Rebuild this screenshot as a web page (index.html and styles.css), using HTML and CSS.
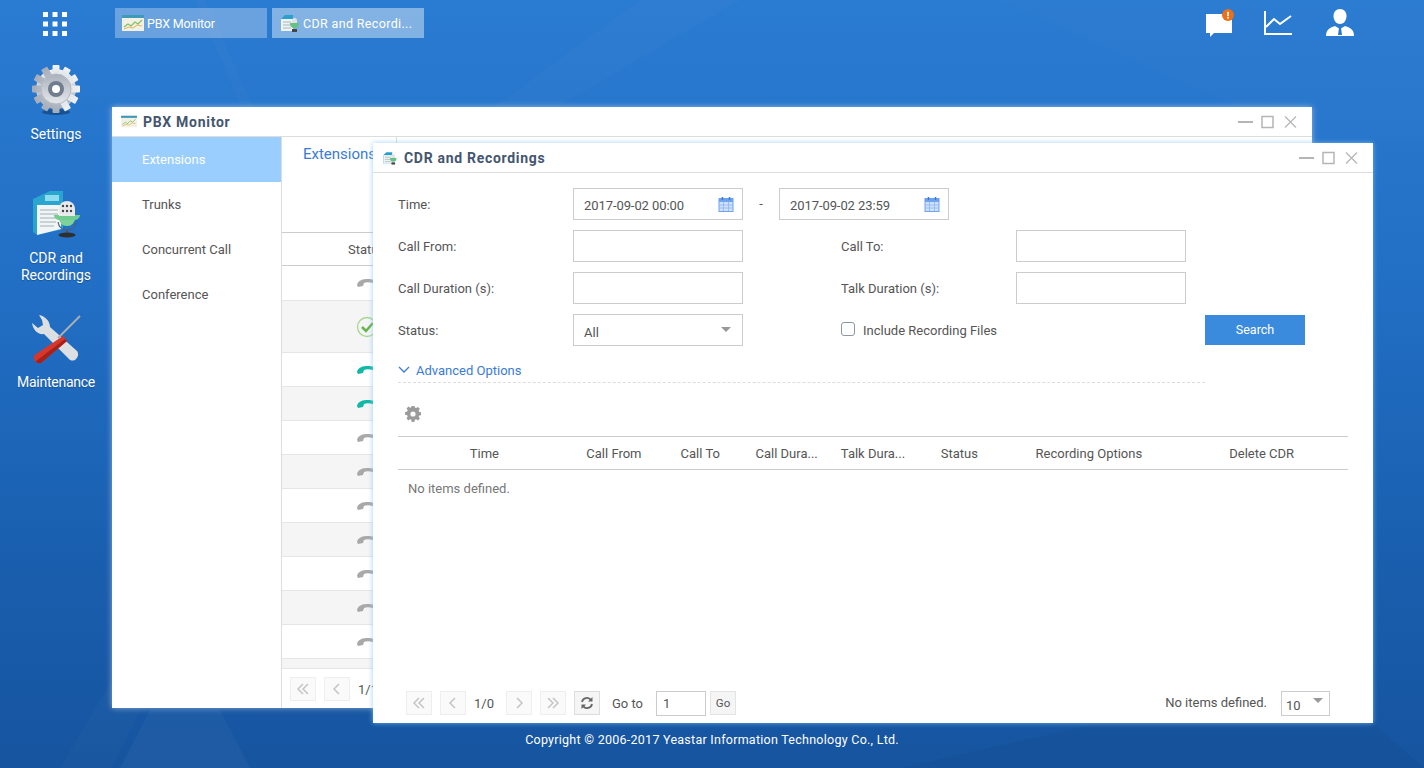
FILE: index.html
```html
<!DOCTYPE html>
<html lang="en">

<head>
    <meta charset="UTF-8">
    <title>Yeastar PBX</title>
    <link rel="stylesheet" href="styles.css">
</head>

<body>
    <svg class="wallpaper" viewBox="0 0 1424 768" aria-hidden="true">
        <polygon points="195,0 205,0 340,300 112,768 60,768 330,310" fill="#fff" opacity="0.018"/>
        <polygon points="640,0 740,0 500,140 450,140" fill="#fff" opacity="0.02"/>
        <polygon points="1000,0 1424,0 1424,140 1312,140" fill="#fff" opacity="0.01"/>
        <polygon points="120,768 150,710 220,710 250,768" fill="#fff" opacity="0.035"/>
        <polygon points="900,768 1100,723 1373,723 1424,768" fill="#000" opacity="0.03"/>
    </svg>

    <!-- top bar -->
    <header class="topbar">
        <svg class="apps-icon" viewBox="0 0 24 24">
            <g fill="#fff">
                <rect x="0" y="0" width="5" height="5"/><rect x="9.5" y="0" width="5" height="5"/><rect x="19" y="0" width="5" height="5"/>
                <rect x="0" y="9.5" width="5" height="5"/><rect x="9.5" y="9.5" width="5" height="5"/><rect x="19" y="9.5" width="5" height="5"/>
                <rect x="0" y="19" width="5" height="5"/><rect x="9.5" y="19" width="5" height="5"/><rect x="19" y="19" width="5" height="5"/>
            </g>
        </svg>
        <div class="task-list">
            <div class="task task-back">
                <svg class="small-icon" viewBox="0 0 22 18"><use href="#monitor-icon"/></svg>
                <span>PBX Monitor</span>
            </div>
            <div class="task task-front">
                <svg class="small-icon" viewBox="0 0 22 18"><use href="#cdr-icon"/></svg>
                <span>CDR and Recordi...</span>
            </div>
        </div>
        <div class="top-actions">
            <svg class="top-icon" viewBox="0 0 30 26">
                <path d="M1 4h26v19H9l-4 4v-4H1z" fill="#fff"/>
                <circle cx="23" cy="5" r="6" fill="#e8701a"/>
                <rect x="22.2" y="1.8" width="1.6" height="4.4" fill="#fff"/>
                <rect x="22.2" y="7" width="1.6" height="1.6" fill="#fff"/>
            </svg>
            <svg class="top-icon" viewBox="0 0 30 26">
                <path d="M2 1v23h27" fill="none" stroke="#fff" stroke-width="2"/>
                <path d="M3 17l8-8 6 5 11-8" fill="none" stroke="#fff" stroke-width="2"/>
            </svg>
            <svg class="top-icon user-icon" viewBox="0 0 28 28">
                <path d="M14 0c4 0 6.500 3 6.500 7 0 3.500-2 8-6.500 8s-6.500-4.500-6.500-8c0-4 2.500-7 6.500-7z" fill="#fff"/>
                <path d="M0 27c0-6 3-8 9-10l5 3 5-3c6 2 9 4 9 10z" fill="#fff"/>
                <path d="M13 19h2l1 7h-4z" fill="#2a78cf"/>
            </svg>
        </div>
    </header>

    <!-- desktop icons -->
    <nav class="desktop-icons">
        <div class="desk-item item-settings">
            <svg class="desk-icon" viewBox="0 0 50 50">
                <defs>
                    <linearGradient id="gearFill" x1="0" y1="0" x2="0" y2="1">
                        <stop offset="0" stop-color="#f0f2f4"/>
                        <stop offset="1" stop-color="#a4acb8"/>
                    </linearGradient>
                    <linearGradient id="gearInner" x1="0" y1="0" x2="0" y2="1">
                        <stop offset="0" stop-color="#aab1bc"/>
                        <stop offset="1" stop-color="#e6e8ec"/>
                    </linearGradient>
                </defs>
                <ellipse cx="25" cy="47" rx="14" ry="3" fill="#0d3a70" opacity="0.6"/>
                <g fill="url(#gearFill)">
                    <circle cx="25" cy="24" r="20"/>
                    <rect x="21.500" y="0" width="7" height="48" rx="1"/>
                    <rect x="21.500" y="0" width="7" height="48" rx="1" transform="rotate(30 25 24)"/>
                    <rect x="21.500" y="0" width="7" height="48" rx="1" transform="rotate(60 25 24)"/>
                    <rect x="21.500" y="0" width="7" height="48" rx="1" transform="rotate(90 25 24)"/>
                    <rect x="21.500" y="0" width="7" height="48" rx="1" transform="rotate(120 25 24)"/>
                    <rect x="21.500" y="0" width="7" height="48" rx="1" transform="rotate(150 25 24)"/>
                </g>
                <circle cx="25" cy="24" r="15" fill="url(#gearInner)" stroke="#b4bac4"/>
                <circle cx="25" cy="24" r="8" fill="#717c8e"/>
                <circle cx="25" cy="24" r="4" fill="#fff"/>
            </svg>
            <span>Settings</span>
        </div>
        <div class="desk-item item-cdr">
            <svg class="desk-icon" viewBox="0 0 50 50">
                <path d="M2 10L19 2h13v38L6 46l-4-3z" fill="#2aa5d0"/>
                <path d="M6 16h24v24L6 46z" fill="#f2f5f5"/>
                <path d="M14 6h14v6H14z" fill="#8fdcf0"/>
                <path d="M9 21h18M9 25h18M9 29h18M9 33h16M9 37h14" stroke="#bcc6ca" stroke-width="1.300"/>
                <path d="M27 33c1 6 5 8 9 8s8-2 9-8" fill="none" stroke="#55606a" stroke-width="1.200"/>
                <path d="M36 41v4" stroke="#555" stroke-width="2"/>
                <ellipse cx="36" cy="46" rx="8.500" ry="2.500" fill="#2f2f2f"/>
                <rect x="28" y="22" width="16" height="15" rx="7.500" fill="#7ed39a"/>
                <path d="M23 26h26c0 3-3 5-6 5H29c-3 0-6-2-6-5z" fill="#72cc90"/>
                <path d="M28 20a8 8 0 0 1 16 0v7H28z" fill="#e8eaec"/>
                <circle cx="32" cy="17" r="1.200" fill="#444"/><circle cx="36" cy="17" r="1.200" fill="#444"/><circle cx="40" cy="17" r="1.200" fill="#444"/>
                <circle cx="32" cy="22" r="1.200" fill="#444"/><circle cx="36" cy="22" r="1.200" fill="#444"/><circle cx="40" cy="22" r="1.200" fill="#444"/>
            </svg>
            <span>CDR and<br>Recordings</span>
        </div>
        <div class="desk-item item-maint">
            <svg class="desk-icon" viewBox="0 0 50 50">
                <path d="M8 1c6 1 11 6 11 12l27 24c2 3 1 6-1 8s-5 2-7 0L13 20C7 21 2 16 1 9l6 5 5-3-1-5z" fill="#dde0e3"/>
                <path d="M49 2L27 24" stroke="#a8aeb3" stroke-width="2"/>
                <path d="M32 22l4 5-26 22c-3 1-6-1-7-4-1-2 0-4 2-5z" fill="#d6372c"/>
                <path d="M34 25l2 2-26 22c-2 .7-4 0-5.500-1.500z" fill="#a92018"/>
            </svg>
            <span>Maintenance</span>
        </div>
    </nav>

    <!-- PBX Monitor window -->
    <section class="window window-pbx">
        <div class="win-title">
            <svg class="small-icon" viewBox="0 0 22 18"><use href="#monitor-icon"/></svg>
            <span class="win-name">PBX Monitor</span>
            <svg class="win-controls" viewBox="0 0 59 14"><use href="#controls"/></svg>
        </div>
        <div class="pbx-main">
            <ul class="side-menu">
                <li class="active">Extensions</li>
                <li>Trunks</li>
                <li>Concurrent Call</li>
                <li>Conference</li>
            </ul>
            <div class="pbx-content">
                <div class="tab-strip">
                    <div class="tab">Extensions</div>
                </div>
                <div class="pbx-head">Status</div>
                <div class="pbx-row first"><svg class="phone" viewBox="0 0 20 10"><use href="#phone-icon"/></svg></div>
                <div class="pbx-row alt tall">
                    <svg class="check" viewBox="0 0 22 22">
                        <circle cx="11" cy="11" r="9.500" fill="none" stroke="#a6d88f" stroke-width="1.300"/>
                        <path d="M6 11l4 4 7-8" fill="none" stroke="#66b545" stroke-width="2.500"/>
                    </svg>
                </div>
                <div class="pbx-row"><svg class="phone busy" viewBox="0 0 20 10"><use href="#phone-icon"/></svg></div>
                <div class="pbx-row alt"><svg class="phone busy" viewBox="0 0 20 10"><use href="#phone-icon"/></svg></div>
                <div class="pbx-row"><svg class="phone" viewBox="0 0 20 10"><use href="#phone-icon"/></svg></div>
                <div class="pbx-row alt"><svg class="phone" viewBox="0 0 20 10"><use href="#phone-icon"/></svg></div>
                <div class="pbx-row"><svg class="phone" viewBox="0 0 20 10"><use href="#phone-icon"/></svg></div>
                <div class="pbx-row alt"><svg class="phone" viewBox="0 0 20 10"><use href="#phone-icon"/></svg></div>
                <div class="pbx-row"><svg class="phone" viewBox="0 0 20 10"><use href="#phone-icon"/></svg></div>
                <div class="pbx-row alt"><svg class="phone" viewBox="0 0 20 10"><use href="#phone-icon"/></svg></div>
                <div class="pbx-row"><svg class="phone" viewBox="0 0 20 10"><use href="#phone-icon"/></svg></div>
                <div class="pbx-row alt short"></div>
                <div class="pbx-pager">
                    <button class="page-btn"><svg viewBox="0 0 14 12"><use href="#first-icon"/></svg></button>
                    <button class="page-btn"><svg viewBox="0 0 14 12"><use href="#prev-icon"/></svg></button>
                    <span class="page-num">1/1</span>
                </div>
            </div>
        </div>
    </section>

    <!-- CDR window -->
    <section class="window window-cdr">
        <div class="win-title">
            <svg class="small-icon" viewBox="0 0 22 18"><use href="#cdr-icon"/></svg>
            <span class="win-name">CDR and Recordings</span>
            <svg class="win-controls" viewBox="0 0 59 14"><use href="#controls"/></svg>
        </div>
        <div class="cdr-body">
            <div class="form-row">
                <label>Time:</label>
                <div class="input date">2017-09-02 00:00
                    <svg class="cal" viewBox="0 0 16 16"><use href="#cal-icon"/></svg>
                </div>
                <span class="dash">-</span>
                <div class="input date">2017-09-02 23:59
                    <svg class="cal" viewBox="0 0 16 16"><use href="#cal-icon"/></svg>
                </div>
            </div>
            <div class="form-row">
                <label>Call From:</label>
                <div class="input"></div>
                <label class="second">Call To:</label>
                <div class="input"></div>
            </div>
            <div class="form-row">
                <label>Call Duration (s):</label>
                <div class="input"></div>
                <label class="second">Talk Duration (s):</label>
                <div class="input"></div>
            </div>
            <div class="form-row">
                <label>Status:</label>
                <div class="input select">All<i class="caret"></i></div>
                <div class="include"><i class="checkbox"></i>Include Recording Files</div>
                <button class="search-btn">Search</button>
            </div>

            <div class="advanced">
                <svg viewBox="0 0 12 8"><path d="M1 1l5 5 5-5" fill="none" stroke="#3a7bd5" stroke-width="1.300"/></svg>
                <span>Advanced Options</span>
            </div>

            <div class="toolbar">
                <svg class="cog" viewBox="0 0 16 16">
                    <path d="M6.500 0h3l.4 2.200 1.500.6 1.900-1.300 2.100 2.100-1.300 1.900.6 1.500 2.300.4v3l-2.300.4-.6 1.500 1.300 1.900-2.100 2.100-1.900-1.300-1.500.6-.4 2.300h-3l-.4-2.300-1.500-.6-1.900 1.300L.9 13.900l1.300-1.900-.6-1.500L-.7 10V7l2.300-.4.600-1.500L.9 3.200 3 1.100l1.900 1.300 1.200-.6z" fill="#9b9b9b" transform="translate(.7 -.5) scale(.92)"/>
                    <circle cx="8" cy="8" r="2.600" fill="#fff"/>
                </svg>
            </div>

            <div class="cdr-head">
                <span>Time</span>
                <span>Call From</span>
                <span>Call To</span>
                <span>Call Dura...</span>
                <span>Talk Dura...</span>
                <span>Status</span>
                <span>Recording Options</span>
                <span>Delete CDR</span>
            </div>
            <div class="empty">No items defined.</div>
        </div>
        <div class="cdr-pager">
            <button class="page-btn"><svg viewBox="0 0 14 12"><use href="#first-icon"/></svg></button>
            <button class="page-btn"><svg viewBox="0 0 14 12"><use href="#prev-icon"/></svg></button>
            <span class="page-num">1/0</span>
            <button class="page-btn"><svg viewBox="0 0 14 12"><use href="#next-icon"/></svg></button>
            <button class="page-btn"><svg viewBox="0 0 14 12"><use href="#last-icon"/></svg></button>
            <button class="page-btn refresh">
                <svg viewBox="0 0 14 14">
                    <path d="M2 6a5 5 0 0 1 9-2M12 8a5 5 0 0 1-9 2" fill="none" stroke="#666" stroke-width="1.800"/>
                    <path d="M12.500 1v4.500H8zM1.500 13V8.500H6z" fill="#666"/>
                </svg>
            </button>
            <span class="goto">Go to</span>
            <div class="goto-input">1</div>
            <button class="go-btn">Go</button>
            <span class="pager-info">No items defined.</span>
            <div class="size-select">10<i class="caret"></i></div>
        </div>
    </section>

    <footer class="copyright">Copyright © 2006-2017 Yeastar Information Technology Co., Ltd.</footer>

    <!-- shared icons -->
    <svg class="defs" aria-hidden="true">
        <defs>
            <g id="monitor-icon">
                <rect x="0" y="1" width="22" height="16" fill="#f3f1e4"/>
                <rect x="0" y="1" width="22" height="3" fill="#3d9bb8"/>
                <path d="M2 13l4-3 3 2 4-4 3 2 4-4" fill="none" stroke="#7fbf6a" stroke-width="1.200"/>
                <path d="M2 15l5-2 4 1 4-3 5 1" fill="none" stroke="#e2b35a" stroke-width="1"/>
            </g>
            <g id="cdr-icon">
                <path d="M2 5l4-4h8v16H2z" fill="#2aa0cc"/>
                <rect x="2" y="5" width="12" height="12" fill="#eef3f4"/>
                <path d="M4 8h8M4 11h8M4 14h8" stroke="#aab6bb"/>
                <rect x="13" y="4" width="5" height="9" rx="2.500" fill="#dfe3e5"/>
                <path d="M11 9c0 4 2 5 4.500 5S20 13 20 9z" fill="#66c184"/>
                <rect x="13" y="15" width="5" height="3" fill="#444"/>
            </g>
            <g id="controls" fill="none" stroke="#b5b5b5">
                <path d="M0 7h15" stroke-width="2"/>
                <rect x="24" y="1.500" width="11" height="11" stroke-width="1.500"/>
                <path d="M47 1.500l11 11M58 1.500l-11 11" stroke-width="1.200"/>
            </g>
            <path id="phone-icon" d="M0 7C1 2 6 1 11 1c4 0 8 1 9 5v3l-4-2V5C12 4 9 4 7 5L6 8l-5 1z" fill="currentColor"/>
            <path id="first-icon" d="M7 1L2 6l5 5M12 1L7 6l5 5" fill="none" stroke="#c4c4c4" stroke-width="1.500"/>
            <path id="prev-icon" d="M9 1L4 6l5 5" fill="none" stroke="#c4c4c4" stroke-width="1.500"/>
            <path id="next-icon" d="M5 1l5 5-5 5" fill="none" stroke="#c4c4c4" stroke-width="1.500"/>
            <path id="last-icon" d="M2 1l5 5-5 5M7 1l5 5-5 5" fill="none" stroke="#c4c4c4" stroke-width="1.500"/>
            <g id="cal-icon">
                <rect x="1" y="2.500" width="14" height="13" fill="#cfe0fb" stroke="#6fa3ec"/>
                <rect x="1" y="2.500" width="14" height="3.500" fill="#6fa3ec"/>
                <path d="M4.500 1v3M11.500 1v3" stroke="#3a7bd5" stroke-width="1.500"/>
                <path d="M1 9h14M1 12h14M5.500 6v9M10.500 6v9" stroke="#8db6f0" stroke-width="0.800"/>
            </g>
        </defs>
    </svg>
</body>

</html>
```

FILE: styles.css
```css
* {
    margin: 0;
    padding: 0;
    box-sizing: border-box;
}

html,
body {
    width: 1424px;
    height: 768px;
    overflow: hidden;
}

body {
    position: relative;
    font-family: Roboto, 'Liberation Sans', sans-serif;
    font-size: 13px;
    color: #555;
    background: linear-gradient(180deg, #2a7bd2 0%, #2270c6 35%, #1a60b0 70%, #16549f 100%);
}

.wallpaper {
    position: absolute;
    left: 0;
    top: 0;
    width: 1424px;
    height: 768px;
}

.defs {
    position: absolute;
    width: 0;
    height: 0;
}

/* top bar */
.topbar {
    position: relative;
    display: flex;
    align-items: flex-start;
    height: 46px;
    padding-top: 8px;
}

.apps-icon {
    width: 24px;
    height: 24px;
    margin: 4px 0 0 43px;
}

.task-list {
    display: flex;
    gap: 5px;
    margin-left: 48px;
}

.task {
    display: flex;
    align-items: center;
    width: 152px;
    height: 30px;
    padding-left: 7px;
    color: #fff;
    font-size: 12.5px;
}

.task-back {
    gap: 3px;
    letter-spacing: -0.2px;
    background-color: rgba(255, 255, 255, 0.3);
}

.task-front {
    gap: 2px;
    letter-spacing: 0.35px;
    background-color: rgba(255, 255, 255, 0.42);
}

.small-icon {
    width: 22px;
    height: 18px;
    flex-shrink: 0;
}

.top-actions {
    display: flex;
    align-items: center;
    gap: 28px;
    margin-left: auto;
    margin-right: 70px;
    height: 30px;
}

.top-icon {
    width: 30px;
    height: 26px;
    overflow: visible;
}

.user-icon {
    width: 28px;
    height: 28px;
    margin-left: 5px;
}

/* desktop icons */
.desktop-icons {
    position: absolute;
    left: 0;
    top: 65px;
    width: 112px;
    display: flex;
    flex-direction: column;
    align-items: center;
    color: #fff;
    font-size: 14px;
    text-align: center;
    line-height: 17px;
    text-shadow: 0 1px 1px rgba(0, 0, 0, 0.25);
}

.desk-item {
    display: flex;
    flex-direction: column;
    align-items: center;
}

.desk-icon {
    width: 50px;
    height: 50px;
    margin-bottom: 11px;
}

.item-cdr {
    margin-top: 46px;
}

.item-maint {
    margin-top: 30px;
    letter-spacing: -0.25px;
}

.item-maint .desk-icon {
    margin-bottom: 10px;
}

/* windows */
.window {
    position: absolute;
    display: flex;
    flex-direction: column;
    background-color: #fff;
}

.window-pbx {
    left: 112px;
    top: 107px;
    width: 1200px;
    height: 601px;
    box-shadow: 0 0 6px rgba(235, 240, 245, 0.55);
}

.window-cdr {
    left: 373px;
    top: 143px;
    width: 1000px;
    height: 580px;
    box-shadow: 0 0 5px rgba(130, 195, 250, 0.8);
}

.win-title {
    display: flex;
    align-items: center;
    gap: 6px;
    height: 30px;
    padding: 0 15px 0 9px;
    flex-shrink: 0;
    border-bottom: 1px solid #ddd;
}

.win-name {
    font-size: 14px;
    font-weight: bold;
    letter-spacing: 0.7px;
    color: #44566f;
}

.window-pbx .win-title .small-icon {
    width: 16px;
    height: 13px;
}

.window-cdr .win-title .small-icon {
    width: 16px;
    height: 16px;
}

.win-controls {
    width: 59px;
    height: 14px;
    margin-left: auto;
}

/* pbx monitor */
.pbx-main {
    display: flex;
    flex: 1;
    min-height: 0;
}

.side-menu {
    width: 170px;
    list-style: none;
    border-right: 1px solid #ddd;
}

.side-menu li {
    height: 45px;
    line-height: 45px;
    padding-left: 30px;
}

.side-menu .active {
    background-color: #99ceff;
    color: #fff;
}

.pbx-content {
    flex: 1;
    min-width: 0;
}

.tab-strip {
    height: 95px;
}

.tab {
    width: 115px;
    height: 32px;
    padding-left: 21px;
    line-height: 35px;
    font-size: 15px;
    color: #3a7bd5;
    border-right: 1px solid #ddd;
}

.pbx-head {
    height: 34px;
    width: 100%;
    padding-left: 66px;
    line-height: 33px;
    border-top: 1px solid #ccc;
    border-bottom: 1px solid #ccc;
}

.pbx-row {
    display: flex;
    align-items: center;
    height: 34px;
    padding-left: 75px;
    border-bottom: 1px solid #e6e6e6;
}

.pbx-row.alt {
    background-color: #f5f5f5;
}

.pbx-row.first {
    height: 35px;
}

.pbx-row.tall {
    height: 52px;
}

.pbx-row.short {
    height: 10px;
}

.phone {
    width: 20px;
    height: 10px;
    color: #a9a9a9;
}

.phone.busy {
    color: #0fb9a5;
}

.check {
    width: 22px;
    height: 22px;
    margin-left: -1px;
}

.pbx-pager {
    display: flex;
    align-items: center;
    gap: 8px;
    height: 40px;
    padding-left: 8px;
}

/* cdr window */
.cdr-body {
    flex: 1;
    padding: 15px 25px 0;
}

.form-row {
    display: flex;
    align-items: center;
    height: 32px;
    margin-bottom: 10px;
}

.form-row label {
    width: 175px;
    flex-shrink: 0;
}

.form-row .second {
    margin-left: 98px;
}

.input {
    position: relative;
    width: 170px;
    height: 32px;
    line-height: 32px;
    padding-left: 10px;
    flex-shrink: 0;
    border: 1px solid #ccc;
    color: #555;
}

.date {
    line-height: 33px;
    letter-spacing: -0.08px;
}

.cal {
    position: absolute;
    right: 8px;
    top: 7px;
    width: 16px;
    height: 16px;
}

.dash {
    width: 36px;
    text-align: center;
    padding-bottom: 2px;
}

.select {
    line-height: 36px;
}

.caret {
    position: absolute;
    right: 11px;
    top: 12px;
    border-left: 5px solid transparent;
    border-right: 5px solid transparent;
    border-top: 5px solid #999;
}

.include {
    display: flex;
    align-items: center;
    gap: 8px;
    width: 364px;
    margin-left: 98px;
}

.checkbox {
    width: 14px;
    height: 14px;
    margin-bottom: 3px;
    border: 1px solid #8d98a4;
    border-radius: 3px;
}

.search-btn {
    width: 100px;
    height: 30px;
    padding-bottom: 2px;
    border: none;
    background-color: #3a8bdd;
    color: #fff;
    font-family: inherit;
    font-size: 12.5px;
}

.advanced {
    display: flex;
    align-items: center;
    gap: 6px;
    width: 807px;
    height: 25px;
    margin-top: 12px;
    border-bottom: 1px dashed #ddd;
    color: #3a7bd5;
}

.advanced svg {
    width: 12px;
    height: 8px;
}

.toolbar {
    display: flex;
    align-items: center;
    height: 53px;
    padding: 8px 0 0 7px;
}

.cog {
    width: 16px;
    height: 16px;
}

.cdr-head {
    display: grid;
    grid-template-columns: 2fr 1fr 1fr 1fr 1fr 1fr 2fr 2fr;
    height: 34px;
    line-height: 33px;
    text-align: center;
    border-top: 1px solid #ccc;
    border-bottom: 1px solid #ccc;
}

.empty {
    padding: 11px 10px;
    color: #777;
}

.cdr-pager {
    display: flex;
    align-items: center;
    height: 26px;
    margin-bottom: 7px;
    padding: 0 43px 0 33px;
    flex-shrink: 0;
}

.page-btn {
    display: flex;
    align-items: center;
    justify-content: center;
    width: 26px;
    height: 24px;
    margin-right: 8px;
    background-color: #fafafa;
    border: 1px solid #eee;
}

.page-btn svg {
    width: 14px;
    height: 12px;
}

.refresh {
    background-color: #f5f5f5;
    border-color: #ddd;
}

.refresh svg {
    width: 14px;
    height: 14px;
}

.cdr-pager .page-num {
    margin-right: 12px;
}

.pbx-pager .page-btn {
    margin-right: 0;
}

.goto {
    margin: 0 13px 0 4px;
}

.goto-input {
    width: 50px;
    height: 25px;
    line-height: 24px;
    padding-left: 6px;
    border: 1px solid #ccc;
}

.go-btn {
    width: 26px;
    height: 24px;
    margin-left: 4px;
    border: 1px solid #e4e4e4;
    background-color: #f5f5f5;
    color: #555;
    font-family: inherit;
    font-size: 11.5px;
}

.pager-info {
    margin-left: auto;
    margin-right: 14px;
    padding-bottom: 2px;
}

.size-select {
    position: relative;
    width: 49px;
    height: 25px;
    line-height: 27px;
    padding-left: 4px;
    border: 1px solid #ccc;
}

.size-select .caret {
    right: 6px;
    top: 6px;
}

.copyright {
    position: absolute;
    left: 0;
    right: 0;
    top: 732px;
    text-align: center;
    color: #fff;
    font-size: 12.5px;
    letter-spacing: 0.26px;
}
```
